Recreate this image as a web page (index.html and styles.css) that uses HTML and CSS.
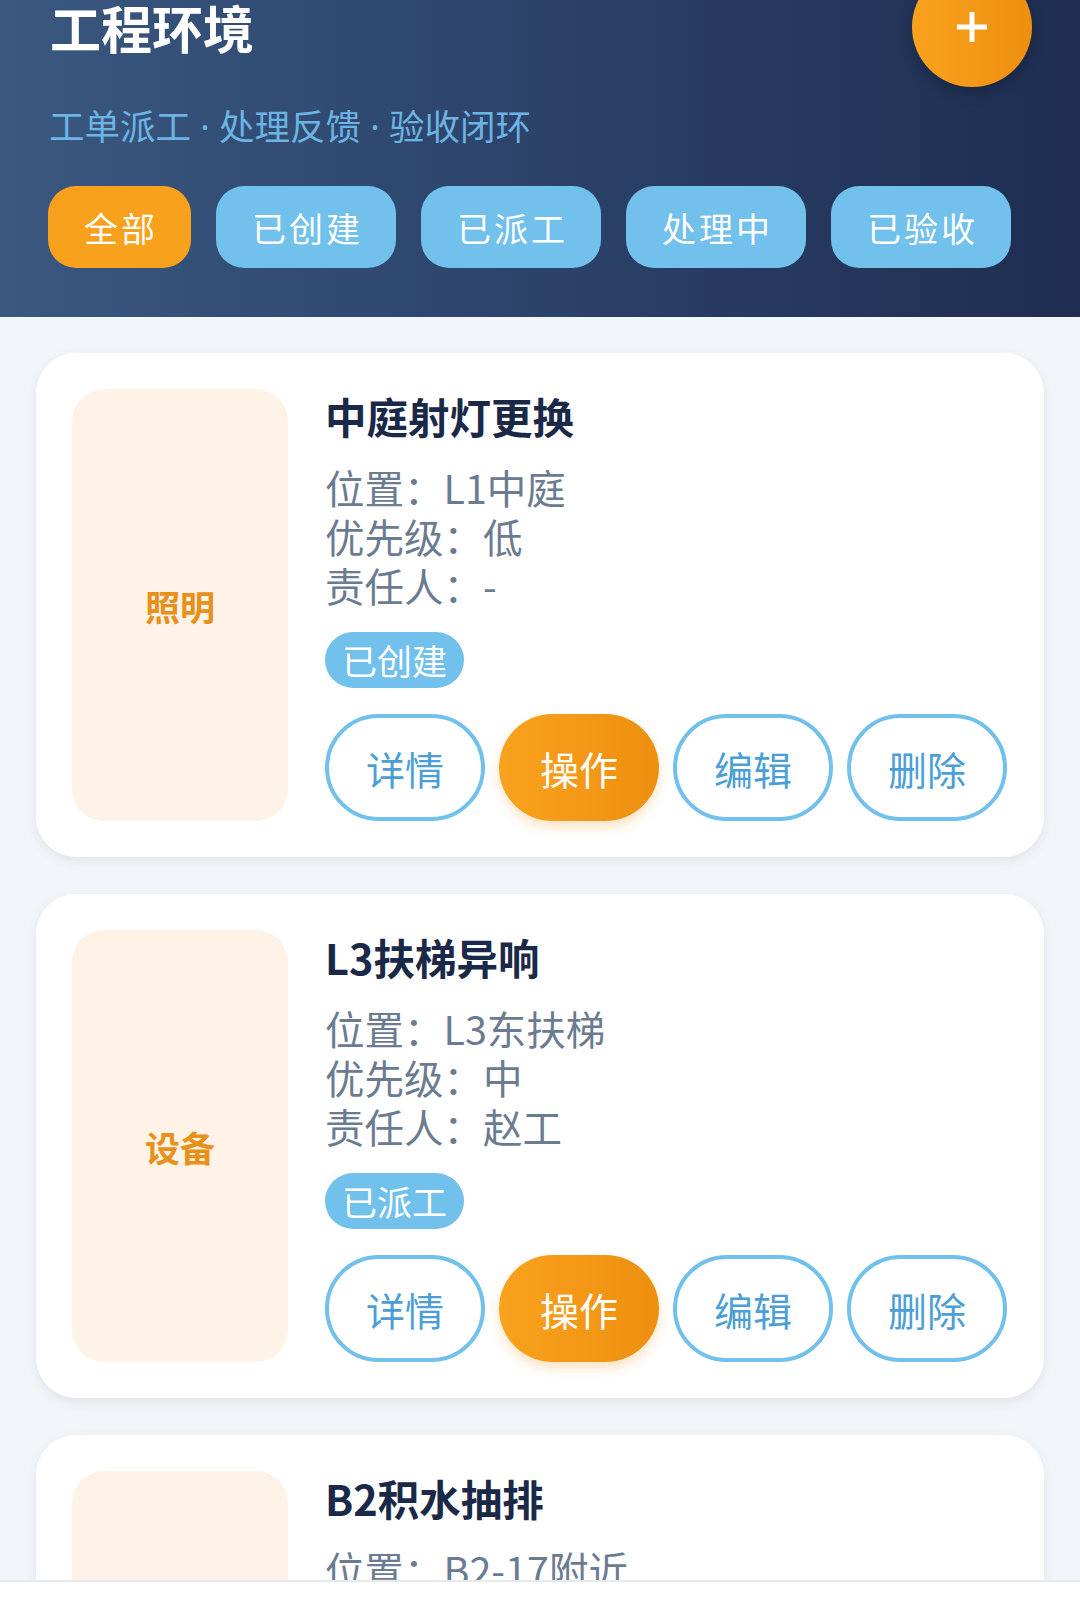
FILE: index.html
```html
<!DOCTYPE html>
<html lang="zh-CN">
<head>
    <meta charset="UTF-8">
    <meta name="viewport" content="width=device-width, initial-scale=1.0">
    <title>工程环境</title>
    <link rel="stylesheet" href="styles.css">
</head>
<body>
    <header class="header">
        <div class="header-top">
            <h1 class="title">工程环境</h1>
            <button class="add-btn" aria-label="新建工单">
                <svg width="30" height="30" viewBox="0 0 30 30">
                    <path d="M15 1v28M1 15h28" stroke="#fff" stroke-width="5" stroke-linecap="square"/>
                </svg>
            </button>
        </div>
        <p class="subtitle">工单派工<span class="dot"> · </span>处理反馈<span class="dot"> · </span>验收闭环</p>
        <div class="filters">
            <button class="filter active">全部</button>
            <button class="filter">已创建</button>
            <button class="filter">已派工</button>
            <button class="filter">处理中</button>
            <button class="filter">已验收</button>
        </div>
    </header>

    <main class="list">
        <div class="card">
            <div class="category">照明</div>
            <div class="card-body">
                <h2 class="card-title">中庭射灯更换</h2>
                <div class="info">
                    <div>位置：L1中庭</div>
                    <div>优先级：低</div>
                    <div>责任人：-</div>
                </div>
                <span class="status">已创建</span>
                <div class="actions">
                    <button class="action">详情</button>
                    <button class="action primary">操作</button>
                    <button class="action">编辑</button>
                    <button class="action">删除</button>
                </div>
            </div>
        </div>

        <div class="card">
            <div class="category">设备</div>
            <div class="card-body">
                <h2 class="card-title">L3扶梯异响</h2>
                <div class="info">
                    <div>位置：L3东扶梯</div>
                    <div>优先级：中</div>
                    <div>责任人：赵工</div>
                </div>
                <span class="status">已派工</span>
                <div class="actions">
                    <button class="action">详情</button>
                    <button class="action primary">操作</button>
                    <button class="action">编辑</button>
                    <button class="action">删除</button>
                </div>
            </div>
        </div>

        <div class="card">
            <div class="category">给排水</div>
            <div class="card-body">
                <h2 class="card-title">B2积水抽排</h2>
                <div class="info">
                    <div>位置：B2-17附近</div>
                    <div>优先级：高</div>
                    <div>责任人：钱工</div>
                </div>
                <span class="status">处理中</span>
                <div class="actions">
                    <button class="action">详情</button>
                    <button class="action primary">操作</button>
                    <button class="action">编辑</button>
                    <button class="action">删除</button>
                </div>
            </div>
        </div>
    </main>

    <nav class="tabbar"></nav>
</body>
</html>
```

FILE: styles.css
```css
body {
    font-family: "Noto Sans CJK SC", "Noto Sans", sans-serif;
    margin: 0;
    padding: 0;
    background-color: #f3f6f9;
    color: #1a2947;
}
button {
    font-family: inherit;
    border: none;
    cursor: pointer;
}
.header {
    background: linear-gradient(90deg, #3a5880 0%, #2a4067 55%, #1e2d50 100%);
    padding: 0 48px 49px 50px;
}
.header-top {
    display: flex;
    justify-content: space-between;
    align-items: center;
    margin-top: -33px;
}
.title {
    margin: 0;
    font-size: 51px;
    line-height: 58px;
    font-weight: 700;
    color: #fff;
}
.add-btn {
    width: 120px;
    height: 120px;
    border-radius: 50%;
    background: linear-gradient(90deg, #f9a21e, #ee8f10);
    box-shadow: 0 6px 14px rgba(0,0,0,0.2);
    display: flex;
    align-items: center;
    justify-content: center;
    padding: 0;
}
.subtitle {
    margin: 14px 0 0 -1px;
    font-size: 35.5px;
    line-height: 48px;
    color: #6cb4e4;
}
.dot {
    font-family: "Noto Sans", sans-serif;
}
.filters {
    display: flex;
    gap: 25px;
    margin-top: 36px;
    margin-left: -2px;
}
.filter {
    height: 82px;
    padding: 0 33px 0 36px;
    border-radius: 28px;
    background-color: #72c0ec;
    color: #fff;
    font-size: 34px;
    letter-spacing: 3px;
}
.filter.active {
    background-color: #f8a11c;
}
.list {
    display: flex;
    flex-direction: column;
    gap: 37px;
    padding: 36px;
}
.card {
    display: flex;
    gap: 37px;
    background-color: #fff;
    border-radius: 40px;
    padding: 36px;
    box-shadow: 0 4px 12px rgba(30,45,80,0.09);
}
.category {
    width: 216px;
    flex-shrink: 0;
    background-color: #fef3e6;
    border-radius: 32px;
    display: flex;
    align-items: center;
    justify-content: center;
    color: #e8901a;
    font-size: 35px;
    font-weight: 700;
}
.card-body {
    display: flex;
    flex-direction: column;
    align-items: flex-start;
}
.card-title {
    margin: 0;
    font-size: 41.5px;
    line-height: 55px;
    font-weight: 700;
    color: #1a2947;
}
.info {
    margin-top: 18px;
    font-size: 39.5px;
    line-height: 49px;
    color: #6b7b91;
}
.status {
    margin-top: 23px;
    height: 56px;
    line-height: 56px;
    padding: 0 17px;
    border-radius: 28px;
    background-color: #72c0ec;
    color: #fff;
    font-size: 35px;
}
.actions {
    display: flex;
    gap: 14px;
    margin-top: 26px;
}
.action {
    width: 160px;
    height: 107px;
    border: 4px solid #72c0ec;
    border-radius: 54px;
    background-color: #fff;
    color: #4b9fd6;
    font-size: 39px;
}
.action.primary {
    border: none;
    background: linear-gradient(90deg, #f9a21e, #ee8f10);
    color: #fff;
    box-shadow: 0 6px 12px rgba(238,143,16,0.25);
}
.tabbar {
    position: fixed;
    left: 0;
    right: 0;
    bottom: 0;
    height: 31px;
    background-color: #fff;
    border-top: 2px solid #e6eaef;
}
```
